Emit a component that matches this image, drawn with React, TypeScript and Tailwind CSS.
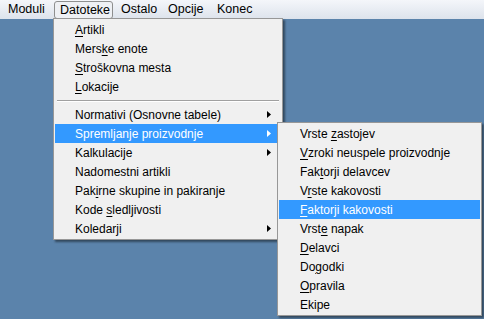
import React from 'react';

type Item = { label: string; u?: number; arrow?: boolean; active?: boolean; sep?: boolean };

const MAIN: Item[] = [
  { label: 'Artikli', u: 0 },
  { label: 'Merske enote', u: 4 },
  { label: 'Stroškovna mesta', u: 0 },
  { label: 'Lokacije', u: 0 },
  { label: '', sep: true },
  { label: 'Normativi (Osnovne tabele)', arrow: true },
  { label: 'Spremljanje proizvodnje', arrow: true, active: true },
  { label: 'Kalkulacije', arrow: true },
  { label: 'Nadomestni artikli' },
  { label: 'Pakirne skupine in pakiranje', u: 3 },
  { label: 'Kode sledljivosti', u: 5 },
  { label: 'Koledarji', arrow: true },
];

const SUB: Item[] = [
  { label: 'Vrste zastojev', u: 6 },
  { label: 'Vzroki neuspele proizvodnje', u: 0 },
  { label: 'Faktorji delavcev', u: 3 },
  { label: 'Vrste kakovosti', u: 1 },
  { label: 'Faktorji kakovosti', u: 0, active: true },
  { label: 'Vrste napak', u: 4 },
  { label: 'Delavci', u: 0 },
  { label: 'Dogodki', u: 2 },
  { label: 'Opravila', u: 0 },
  { label: 'Ekipe' },
];

const Label = ({ text, u }: { text: string; u?: number }) => {
  if (u === undefined) return <span>{text}</span>;
  return (
    <span>
      {text.slice(0, u)}
      <span className="underline underline-offset-2">{text[u]}</span>
      {text.slice(u + 1)}
    </span>
  );
};

const Arrow = ({ white }: { white?: boolean }) => (
  <svg width="4" height="7" viewBox="0 0 4 7">
    <path d="M0 0 L4 3.5 L0 7 Z" fill={white ? '#ffffff' : '#000000'} />
  </svg>
);

const MenuRow = ({ item, pl }: { item: Item; pl: string }) => {
  if (item.sep) {
    return (
      <div className="h-[9px] flex flex-col justify-center px-[2px]">
        <div className="h-px bg-[#a0a0a0]" />
        <div className="h-px bg-white" />
      </div>
    );
  }
  return (
    <div
      className={`h-[19px] flex items-center justify-between pr-[10px] ${pl} ${
        item.active ? 'bg-[#3399ff] text-white' : 'text-black'
      }`}
    >
      <Label text={item.label} u={item.u} />
      {item.arrow && <Arrow white={item.active} />}
    </div>
  );
};

export default function App() {
  return (
    <div
      className="relative w-[484px] h-[319px] bg-[#5b83ab] overflow-hidden text-[12px] leading-none"
      style={{ fontFamily: '"Liberation Sans", Arial, sans-serif' }}
    >
      <div className="h-[19px] flex items-center bg-gradient-to-b from-[#f4f6fa] to-[#dde3ec] text-black text-[12.5px]">
        <span className="ml-[8px] w-[46px]">Moduli</span>
        <span className="w-[59px] h-[18px] mt-[1px] flex items-center px-[5px] border border-[#8e8f8f] rounded-[3px] bg-[#eef0f4]">
          Datoteke
        </span>
        <span className="ml-[8px] w-[47px]">Ostalo</span>
        <span className="w-[49px]">Opcije</span>
        <span>Konec</span>
      </div>

      <div className="absolute left-[53px] top-[18px] w-[230px] bg-[#f0f0f0] border border-[#979797] p-[1px] shadow-[2px_2px_2px_rgba(0,0,0,0.45)]">
        {MAIN.map((it, i) => (
          <MenuRow key={i} item={it} pl="pl-[20px]" />
        ))}
      </div>

      <div className="absolute left-[277px] top-[122px] w-[205px] bg-[#f0f0f0] border border-[#979797] p-[1px] shadow-[2px_2px_2px_rgba(0,0,0,0.45)]">
        {SUB.map((it, i) => (
          <MenuRow key={i} item={it} pl="pl-[21px]" />
        ))}
      </div>
    </div>
  );
}
